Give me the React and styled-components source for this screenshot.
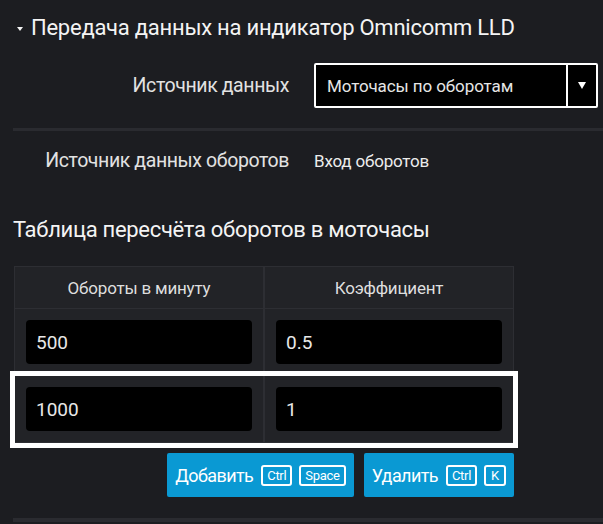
import React from 'react';
import styled, { createGlobalStyle, css } from 'styled-components';

const GlobalStyle = createGlobalStyle`
    html, body {
        margin: 0;
        padding: 0;
        background: #1c1d21;
    }
    body {
        font-family: Roboto, "Noto Sans", "Liberation Sans", sans-serif;
        color: #ececec;
    }
`;

const Page = styled.div`
    width: 603px;
    height: 524px;
    overflow: hidden;
    background: #1c1d21;
`;

const SectionHeader = styled.div`
    display: flex;
    align-items: center;
    gap: 8px;
    height: 54px;
    padding-left: 17px;
    font-size: 22px;
    letter-spacing: -0.25px;
    color: #f4f4f4;
`;

const Caret = styled.span`
    width: 0;
    height: 0;
    border-left: 3.5px solid transparent;
    border-right: 3.5px solid transparent;
    border-top: 4px solid #f4f4f4;
    margin-top: 3px;
`;

const FormRow = styled.div`
    display: grid;
    grid-template-columns: 289px 1fr;
    column-gap: 25px;
    align-items: center;
    padding: ${p => p.$padding};
`;

const Label = styled.div`
    text-align: right;
    font-size: 19.5px;
    letter-spacing: -0.4px;
    color: #e2e2e2;
`;

const Value = styled.div`
    font-size: 17px;
    letter-spacing: -0.2px;
    color: #ececec;
`;

const Select = styled.div`
    display: flex;
    width: 284px;
    height: 45px;
    box-sizing: border-box;
    border: 2px solid #fff;
    border-radius: 2px;
    background: #000;
`;

const SelectText = styled.div`
    flex: 1;
    display: flex;
    align-items: center;
    padding-left: 11px;
    font-size: 17px;
    letter-spacing: -0.1px;
    color: #e6e6e6;
`;

const SelectArrow = styled.div`
    width: 28px;
    display: flex;
    align-items: center;
    justify-content: center;
    border-left: 2px solid #fff;
    &::after {
        content: '';
        border-left: 4px solid transparent;
        border-right: 4px solid transparent;
        border-top: 7px solid #fff;
    }
`;

const Divider = styled.div`
    height: 3px;
    margin-left: 13px;
    background: #2a2b30;
`;

const TableTitle = styled.div`
    padding: 45px 0 0 13px;
    height: 49px;
    font-size: 22px;
    letter-spacing: -0.3px;
    color: #f4f4f4;
`;

const Table = styled.div`
    margin-left: 14px;
    width: 500px;
    border: 1px solid #2d2e33;
    border-bottom: none;
    box-sizing: border-box;
`;

const Row = styled.div`
    display: grid;
    grid-template-columns: 1fr 1fr;
    column-gap: 2px;
    background: #2d2e33;
    border-bottom: 1px solid #2d2e33;
    ${p => p.$selected && css`
        outline: 5px solid #fff;
        position: relative;
    `}
`;

const HeadCell = styled.div`
    height: 41px;
    display: flex;
    align-items: center;
    justify-content: center;
    background: #222327;
    font-size: 17px;
    letter-spacing: -0.2px;
    color: #dedede;
`;

const Cell = styled.div`
    padding: 11px;
    background: #222327;
`;

const Input = styled.div`
    height: 44px;
    display: flex;
    align-items: center;
    padding-left: 10px;
    border-radius: 4px;
    background: #000;
    font-size: 19px;
    color: #e8e8e8;
`;

const Actions = styled.div`
    display: flex;
    justify-content: flex-end;
    gap: 10px;
    width: 514px;
    margin-top: 10px;
`;

const Button = styled.button`
    display: flex;
    align-items: center;
    gap: 7px;
    height: 44px;
    padding: 0 8px;
    border: none;
    border-radius: 2px;
    background: #0a99d3;
    color: #fff;
    font-family: inherit;
    cursor: pointer;
`;

const ButtonText = styled.span`
    margin-right: 1px;
    font-size: 18px;
    letter-spacing: -0.6px;
`;

const Key = styled.span`
    height: 21px;
    min-width: 22px;
    box-sizing: border-box;
    display: flex;
    align-items: center;
    justify-content: center;
    padding: 0 4px;
    border: 2px solid #fff;
    border-radius: 3px;
    font-size: 13px;
    letter-spacing: -0.3px;
    line-height: 1;
`;

const BottomLine = styled.div`
    height: 4px;
    margin: 21px 0 0 13px;
    background: #2a2b30;
`;

const rows = [
    { rpm: '500', k: '0.5' },
    { rpm: '1000', k: '1', selected: true },
];

const App = () => (
    <Page>
        <GlobalStyle />
        <SectionHeader>
            <Caret />
            <span>Передача данных на индикатор Omnicomm LLD</span>
        </SectionHeader>
        <FormRow $padding="9px 0 20px">
            <Label>Источник данных</Label>
            <Select>
                <SelectText>Моточасы по оборотам</SelectText>
                <SelectArrow />
            </Select>
        </FormRow>
        <Divider />
        <FormRow $padding="18px 0 0">
            <Label>Источник данных оборотов</Label>
            <Value>Вход оборотов</Value>
        </FormRow>
        <TableTitle>Таблица пересчёта оборотов в моточасы</TableTitle>
        <Table>
            <Row>
                <HeadCell>Обороты в минуту</HeadCell>
                <HeadCell>Коэффициент</HeadCell>
            </Row>
            {rows.map(r => (
                <Row key={r.rpm} $selected={r.selected}>
                    <Cell><Input>{r.rpm}</Input></Cell>
                    <Cell><Input>{r.k}</Input></Cell>
                </Row>
            ))}
        </Table>
        <Actions>
            <Button>
                <ButtonText>Добавить</ButtonText>
                <Key>Ctrl</Key>
                <Key>Space</Key>
            </Button>
            <Button>
                <ButtonText>Удалить</ButtonText>
                <Key>Ctrl</Key>
                <Key>K</Key>
            </Button>
        </Actions>
        <BottomLine />
    </Page>
);

export default App;
